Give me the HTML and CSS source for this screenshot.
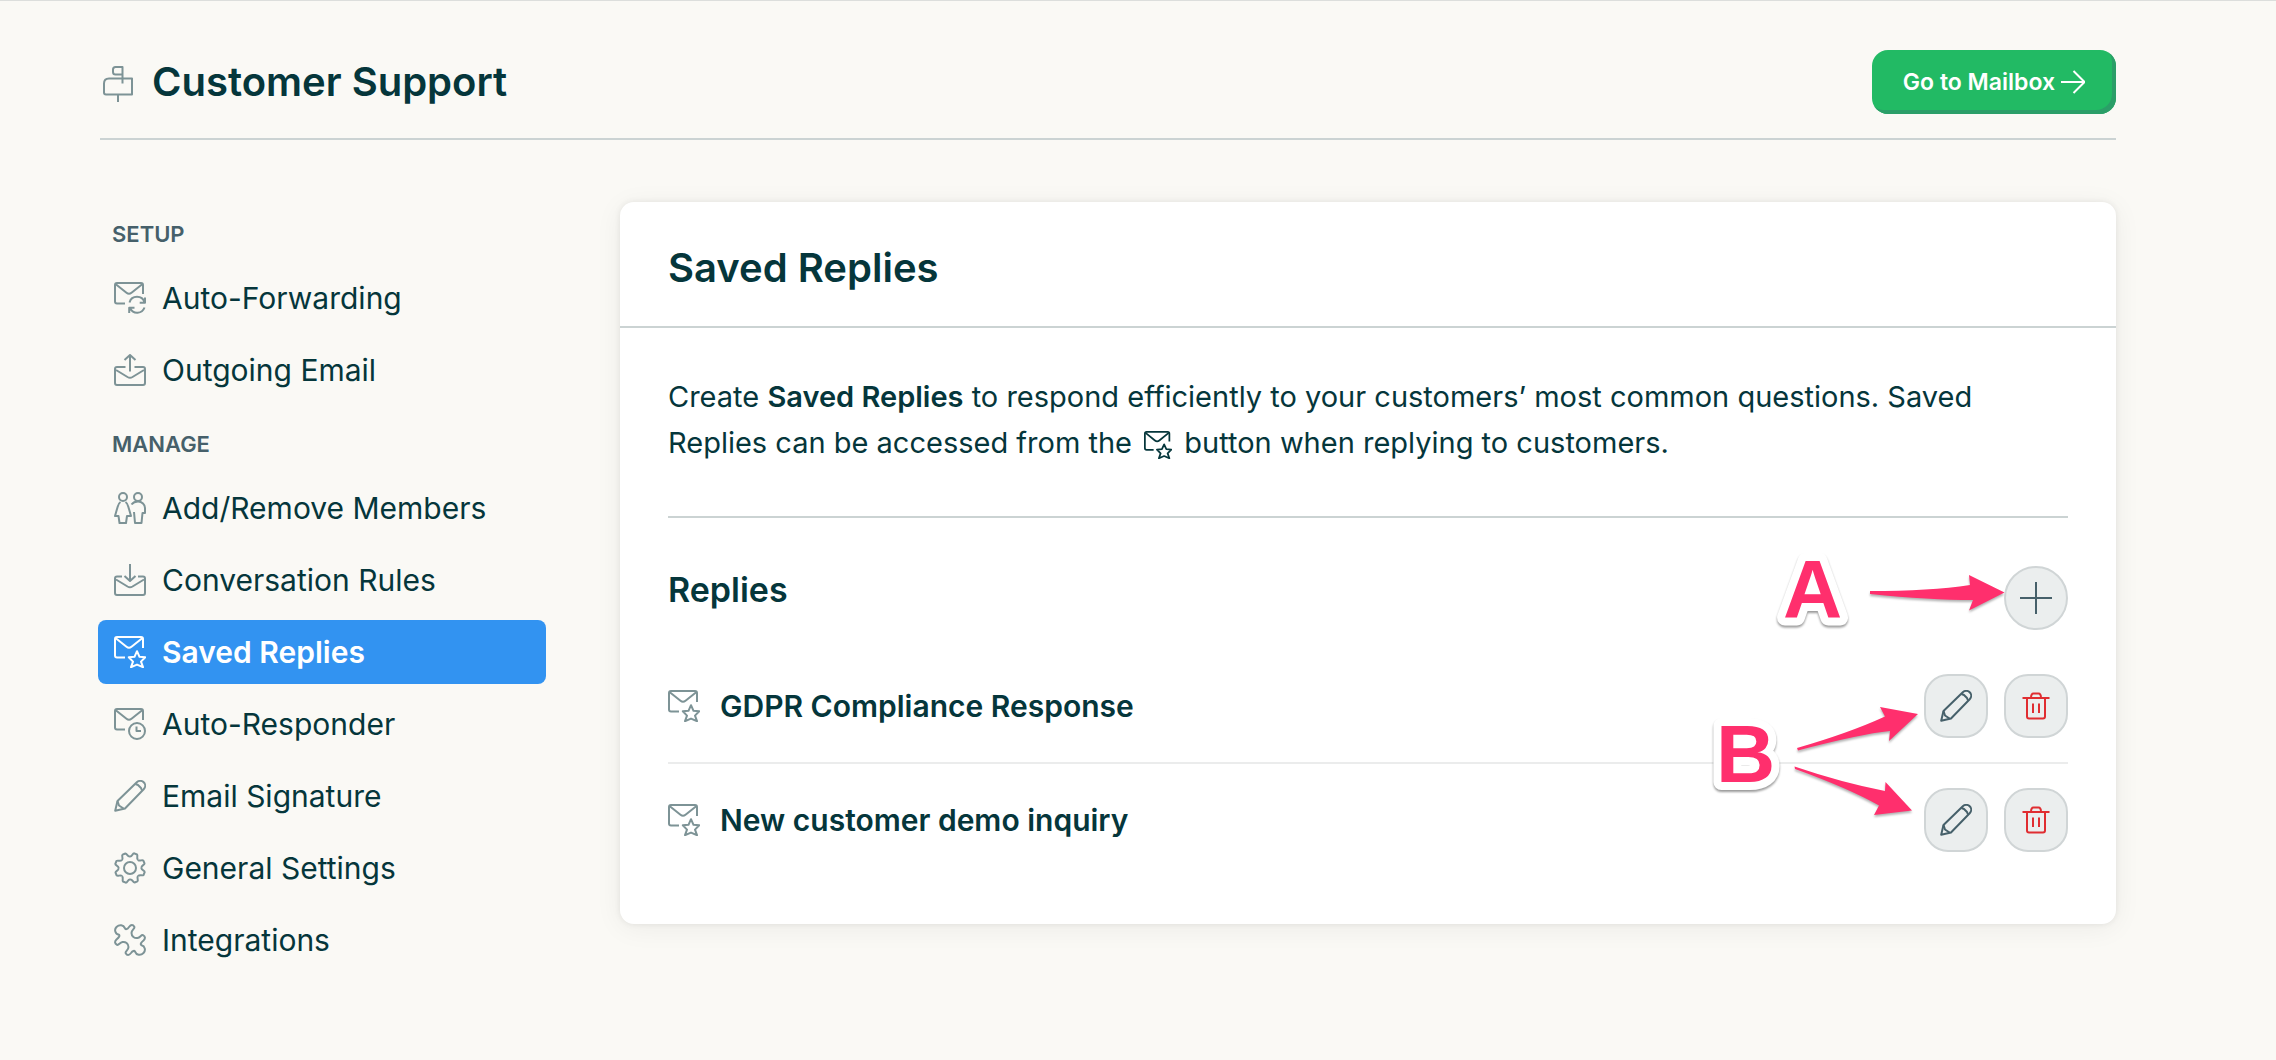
FILE: index.html
```
<!DOCTYPE html>
<html lang="en">
<head>
    <meta charset="UTF-8">
    <meta name="viewport" content="width=device-width, initial-scale=1.0">
    <title>Saved Replies - Customer Support</title>
    <link rel="stylesheet" href="styles.css">
</head>
<body>
    <!-- Icon set -->
    <svg class="icon-defs" aria-hidden="true">
        <symbol id="mail" viewBox="0 0 32 32">
            <path d="M29 12V3a2 2 0 0 0-2-2H3a2 2 0 0 0-2 2v16.5a2 2 0 0 0 2 2h8"/>
            <path d="M1.8 2.2l10.7 8.6q2.5 2 5 0l10.7-8.6"/>
        </symbol>
        <symbol id="forwarding" viewBox="0 0 32 32">
            <use href="#mail"/>
            <path d="M15.5 20.5a7.8 7.8 0 0 1 15 0M31 15.5v5.3h-5.3M30.5 25.5a7.8 7.8 0 0 1-14.3 1M15.2 31v-5.3h5.3"/>
        </symbol>
        <symbol id="saved" viewBox="0 0 32 32">
            <use href="#mail"/>
            <path d="M23 15.2l2.5 5.6 5.7.5-4.2 4.3 2 5.6-6-2.6-6 2.6 2-5.6-4.2-4.3 5.7-.5z"/>
        </symbol>
        <symbol id="responder" viewBox="0 0 32 32">
            <use href="#mail"/>
            <circle cx="23" cy="23" r="8"/>
            <path d="M22.5 18.5V23h4.5"/>
        </symbol>
        <symbol id="outgoing" viewBox="0 0 32 32">
            <path d="M11.5 13H3a2 2 0 0 0-2 2v14a2 2 0 0 0 2 2h26a2 2 0 0 0 2-2V15a2 2 0 0 0-2-2h-8.5"/>
            <path d="M2 16l11.5 7q2.5 1.4 5 0L30 16M16 17.5V1M10.5 6L16 1l5.5 5"/>
        </symbol>
        <symbol id="incoming" viewBox="0 0 32 32">
            <path d="M8 12.5H3a2 2 0 0 0-2 2V29a2 2 0 0 0 2 2h26a2 2 0 0 0 2-2V14.5a2 2 0 0 0-2-2h-5"/>
            <path d="M2 15.5l11.5 7q2.5 1.4 5 0l11.5-7M16 0v17M10.5 12l5.5 5 5.5-5"/>
        </symbol>
        <symbol id="members" viewBox="0 0 32 32">
            <circle cx="9" cy="5" r="4"/>
            <circle cx="24" cy="5" r="4"/>
            <path d="M6.5 10C4 11.5 4 14 3 17L1 24h3.5l1 7H12l1-7h4l-2-7c-1-3-1-5.5-3.5-7"/>
            <path d="M17.5 12.5c1.5-2 3.5-3 6.5-3 4 0 7 3 7 6.5v5h-2.5l-1 10H21l-1-11"/>
        </symbol>
        <symbol id="pencil" viewBox="0 0 32 32">
            <path d="M1.2 30.8L3.5 21 22.8 2.3a4.8 4.8 0 0 1 6.9 6.9L11 28.5z"/>
            <path d="M3.5 21l1.5 4.5 4.5 3M21.5 4l2.5 1 3 3 1 2.5"/>
        </symbol>
        <symbol id="gear" viewBox="0 0 32 32">
            <circle cx="16" cy="16" r="6"/>
            <path id="tooth" d="M16 4.6C18.5 4.6 18.3 1.2 20.2 1.3L23 2.5C24.3 3.8 21.9 6.2 24.1 7.9"/>
            <use href="#tooth" transform="rotate(45 16 16)"/>
            <use href="#tooth" transform="rotate(90 16 16)"/>
            <use href="#tooth" transform="rotate(135 16 16)"/>
            <use href="#tooth" transform="rotate(180 16 16)"/>
            <use href="#tooth" transform="rotate(225 16 16)"/>
            <use href="#tooth" transform="rotate(270 16 16)"/>
            <use href="#tooth" transform="rotate(315 16 16)"/>
        </symbol>
        <symbol id="puzzle" viewBox="0 0 32 32">
            <path d="M5 10.8C1 10 0 5.5 2.5 3 5.5.2 9.5 1 10.8 4c.7 2 2.7 1.2 4.2-1C17 .5 19 .5 20.3 2.8c1 1.7-2.8 2.7-2.8 6.2s3 5.5 6 5c3-.5 3.5-3.5 5.5-2.8 2.5 1.3 2.5 3.3.5 5.3-2.5 2-3.5 3.8-2 4.7 3.5.8 4.5 5.3 2 7.8-3 3-7.2 2-8.3-1.2-.7-1.8-2.7-.8-4.2 1.2-2 2.5-4 2.5-5.3.2-1-1.7 2.8-2.7 2.8-6.2s-3-5.5-6-5c-3 .5-3.5 3.5-5.5 2.8-2.5-1.3-2.5-3.3-.5-5.3 2.5-2 3.5-3.7 2.5-4.7z"/>
        </symbol>
        <symbol id="mailbox" viewBox="0 0 30 36">
            <path d="M19.5 12.5H29v16H3a2 2 0 0 1-2-2v-9q0-5 5-5h13.5M15 28.5V36"/>
            <path d="M19.5 17.5V1h-7q-2.5 0-2.5 2.5V6q0 2.5 2.5 2.5h7"/>
        </symbol>
        <symbol id="arrow" viewBox="0 0 24 24">
            <path d="M0 12h23M12.5 1l11 11-11 11"/>
        </symbol>
        <symbol id="plus" viewBox="0 0 32 32">
            <path d="M16 0v32M0 16h32"/>
        </symbol>
        <symbol id="trash" viewBox="0 0 32 32">
            <path d="M2.5 8h27M7 8v18.5a2 2 0 0 0 2 2h14a2 2 0 0 0 2-2V8M11 8c0-3 .5-4.5 2.5-4.5h5c2 0 2.5 1.5 2.5 4.5M13 13.5V23M19 13.5V23"/>
        </symbol>
    </svg>

    <header class="page-header">
        <svg class="icon mailbox-icon"><use href="#mailbox"/></svg>
        <h1>Customer Support</h1>
        <a href="#" class="mailbox-btn">Go to Mailbox <svg class="icon"><use href="#arrow"/></svg></a>
    </header>

    <div class="container">
        <nav class="sidebar">
            <h3>SETUP</h3>
            <ul>
                <li><a href="#"><svg class="icon"><use href="#forwarding"/></svg>Auto-Forwarding</a></li>
                <li><a href="#"><svg class="icon"><use href="#outgoing"/></svg>Outgoing Email</a></li>
            </ul>
            <h3>MANAGE</h3>
            <ul>
                <li><a href="#"><svg class="icon"><use href="#members"/></svg>Add/Remove Members</a></li>
                <li><a href="#"><svg class="icon"><use href="#incoming"/></svg>Conversation Rules</a></li>
                <li><a href="#" class="active"><svg class="icon"><use href="#saved"/></svg>Saved Replies</a></li>
                <li><a href="#"><svg class="icon"><use href="#responder"/></svg>Auto-Responder</a></li>
                <li><a href="#"><svg class="icon"><use href="#pencil"/></svg>Email Signature</a></li>
                <li><a href="#"><svg class="icon"><use href="#gear"/></svg>General Settings</a></li>
                <li><a href="#"><svg class="icon"><use href="#puzzle"/></svg>Integrations</a></li>
            </ul>
        </nav>

        <main class="card">
            <h2 class="card-title">Saved Replies</h2>
            <div class="card-body">
                <p class="intro">Create <strong>Saved Replies</strong> to respond efficiently to your customers’ most common questions. Saved Replies can be accessed from the <svg class="icon"><use href="#saved"/></svg> button when replying to customers.</p>
                <div class="replies-header">
                    <h3>Replies</h3>
                    <button class="round-btn add-btn" aria-label="Add reply"><svg class="icon"><use href="#plus"/></svg></button>
                </div>
                <ul class="replies">
                    <li>
                        <svg class="icon"><use href="#saved"/></svg>
                        <span class="reply-name">GDPR Compliance Response</span>
                        <button class="round-btn" aria-label="Edit"><svg class="icon"><use href="#pencil"/></svg></button>
                        <button class="round-btn delete-btn" aria-label="Delete"><svg class="icon"><use href="#trash"/></svg></button>
                    </li>
                    <li>
                        <svg class="icon"><use href="#saved"/></svg>
                        <span class="reply-name">New customer demo inquiry</span>
                        <button class="round-btn" aria-label="Edit"><svg class="icon"><use href="#pencil"/></svg></button>
                        <button class="round-btn delete-btn" aria-label="Delete"><svg class="icon"><use href="#trash"/></svg></button>
                    </li>
                </ul>
            </div>

            <!-- Callouts over the buttons -->
            <svg class="callouts" viewBox="0 0 320 280">
                <g class="callout-label">
                    <text x="83" y="77">A</text>
                    <text x="16" y="242">B</text>
                </g>
                <g class="callout-arrow">
                    <path d="M170 51q60 0 100-6l-1-10 35.5 17.5L269 70.5l4-10.5q-43 0-103-6z"/>
                    <path d="M97 208q52-15 88-31.5l-5-9.5 38 7-29 27 1-10q-30 3-92 19.5z"/>
                    <path d="M94.5 226.5q47 16 90.5 24.5l.5-9 26.5 28.5-38 4.5 5-9.5q-30-17-84-36.5z"/>
                </g>
            </svg>
        </main>
    </div>
</body>
</html>
```
FILE: styles.css
```
* {
    box-sizing: border-box;
}
body {
    font-family: Inter, Roboto, sans-serif;
    font-size: 30px;
    color: #05363b;
    margin: 0;
    padding: 0 160px 0 100px;
    background-color: #faf9f5;
    border-top: 1px solid #dcdedc;
}
h1, h2, h3, p, ul {
    margin: 0;
    padding: 0;
}
ul {
    list-style: none;
}
a {
    color: inherit;
    text-decoration: none;
}
.icon-defs {
    display: none;
}
.icon {
    width: 32px;
    height: 32px;
    flex-shrink: 0;
    fill: none;
    stroke: #7d9396;
    stroke-width: 2;
    stroke-linejoin: round;
    overflow: visible;
}
.page-header {
    display: flex;
    align-items: center;
    padding: 49px 0 24px;
    border-bottom: 2px solid #cbd3d3;
}
.page-header h1 {
    font-size: 40px;
    line-height: 48px;
    font-weight: 600;
    flex: 1;
}
.mailbox-icon {
    width: 30px;
    height: 36px;
    margin: 4px 19px 0 3px;
}
.mailbox-btn {
    display: flex;
    align-items: center;
    gap: 6px;
    height: 64px;
    padding: 0 31px;
    border-radius: 16px;
    background: #22ba64;
    box-shadow: inset -4px -4px 0 #2b9e68;
    color: white;
    font-size: 23px;
    font-weight: 600;
}
.mailbox-btn .icon {
    width: 24px;
    height: 24px;
    stroke: white;
}
.container {
    display: flex;
    align-items: flex-start;
    gap: 74px;
    padding: 62px 0;
}
.sidebar {
    width: 448px;
    margin-left: -2px;
    flex-shrink: 0;
}
.sidebar h3 {
    padding: 16px 14px;
    font-size: 22px;
    line-height: 32px;
    font-weight: 600;
    color: #46606a;
}
.sidebar ul {
    display: grid;
    gap: 8px;
    margin-bottom: 10px;
}
.sidebar li a {
    display: flex;
    align-items: center;
    gap: 16px;
    height: 64px;
    padding: 0 16px;
    border-radius: 8px;
}
.sidebar .active {
    background: #3293f1;
    color: white;
    font-weight: 600;
}
.active .icon {
    stroke: white;
}
.card {
    position: relative;
    flex: 1;
    background: white;
    border-radius: 14px;
    box-shadow: 0 0 6px rgba(0, 0, 0, 0.08), 0 4px 28px rgba(0, 0, 0, 0.06);
}
.card-title {
    padding: 42px 48px 34px;
    font-size: 40px;
    line-height: 48px;
    font-weight: 600;
    border-bottom: 2px solid #cbd3d3;
}
.card-body {
    padding: 46px 48px 48px;
}
.intro {
    font-size: 29px;
    line-height: 46px;
    padding-bottom: 50px;
    border-bottom: 2px solid #cbd3d3;
}
.intro strong {
    font-weight: 600;
}
.intro .icon {
    width: 28px;
    height: 28px;
    margin: 0 4px;
    vertical-align: -6px;
    stroke: #05363b;
}
.replies-header {
    display: flex;
    align-items: flex-start;
    justify-content: space-between;
    padding: 48px 0 20px;
}
.replies-header h3 {
    font-size: 34px;
    line-height: 48px;
    font-weight: 600;
}
.replies li {
    display: flex;
    align-items: center;
    gap: 16px;
    padding: 24px 0;
}
.replies li + li {
    border-top: 2px solid #ebecec;
}
.reply-name {
    flex: 1;
    padding-left: 4px;
    font-weight: 600;
}
.round-btn {
    display: flex;
    align-items: center;
    justify-content: center;
    width: 64px;
    height: 64px;
    padding: 0;
    border: 2px solid #d0d5d6;
    border-radius: 24px;
    background: #ebeeee;
    cursor: pointer;
}
.round-btn .icon {
    stroke: #46606a;
}
.add-btn {
    border-radius: 50%;
}
.delete-btn .icon {
    stroke: #e02d31;
}
.callouts {
    position: absolute;
    top: 338px;
    right: 96px;
    width: 320px;
    height: 280px;
    overflow: visible;
    pointer-events: none;
}
.callout-label {
    font: bold 82px "Liberation Sans", Arial, sans-serif;
    fill: #ff2f6d;
    stroke: white;
    stroke-width: 16px;
    stroke-linejoin: round;
    paint-order: stroke;
    filter: drop-shadow(0 2px 1px rgba(0, 0, 0, 0.4));
}
.callout-arrow {
    fill: #ff2f6d;
    filter: drop-shadow(0 2px 1px rgba(0, 0, 0, 0.3));
}
```
